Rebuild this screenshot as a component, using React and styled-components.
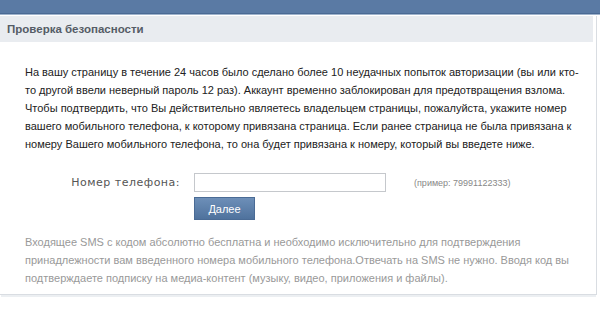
import styled, { createGlobalStyle } from "styled-components";

const Global = createGlobalStyle`
  body {
    margin: 0;
    background: #fff;
    font-family: "Liberation Sans", sans-serif;
  }
`;

const Page = styled.div`
  width: 600px;
  height: 309px;
  overflow: hidden;
  background: #fff;
`;

const TopBar = styled.div`
  height: 13px;
  background: #5a7aa4;
  border-bottom: 1px solid #4a6a94;
  box-shadow: 0 1px 0 #9fb3cc;
`;

const Card = styled.div`
  width: 596px;
  margin-top: 2px;
  border-right: 1px solid #d9dde2;
  border-bottom: 1px solid #d9dde2;
  box-shadow: 0 3px 0 -1px #eceff2;
`;

const Header = styled.div`
  height: 26px;
  margin-right: 3px;
  background: #e9ecf0;
  display: flex;
  align-items: center;
  padding-left: 7px;
  font-size: 11.5px;
  font-weight: bold;
  color: #555c66;
`;

const Body = styled.div`
  padding: 21px 0 7px 25px;
`;

const Text = styled.p`
  margin: 0;
  font-size: 11px;
  line-height: 18px;
  color: ${(p) => (p.muted ? "#999" : "#222")};
  white-space: nowrap;
`;

const Form = styled.div`
  display: grid;
  grid-template-columns: 155px 192px auto;
  column-gap: 14px;
  row-gap: 5px;
  margin: 20px 0 13px;
  align-items: center;
`;

const Label = styled.span`
  justify-self: end;
  font-family: "DejaVu Sans", "Liberation Sans", sans-serif;
  font-size: 11px;
  letter-spacing: 0.5px;
  color: #555;
`;

const Input = styled.input`
  box-sizing: border-box;
  width: 192px;
  height: 19px;
  border: 1px solid #c5c8cc;
  background: #fff;
  padding: 0 3px;
`;

const Hint = styled.span`
  margin-left: 14px;
  font-size: 9px;
  color: #888;
`;

const Button = styled.button`
  grid-column: 2;
  width: 61px;
  height: 23px;
  border: 1px solid #4a6b95;
  background: linear-gradient(#6d8fb8, #4f729d);
  color: #fff;
  font-family: "Liberation Sans", sans-serif;
  font-size: 11px;
  cursor: pointer;
`;

export default function App() {
  return (
    <Page>
      <Global />
      <TopBar />
      <Card>
        <Header>Проверка безопасности</Header>
        <Body>
          <Text>
            На вашу страницу в течение 24 часов было сделано более 10 неудачных попыток авторизации (вы или кто-
            <br />
            то другой ввели неверный пароль 12 раз). Аккаунт временно заблокирован для предотвращения взлома.
            <br />
            Чтобы подтвердить, что Вы действительно являетесь владельцем страницы, пожалуйста, укажите номер
            <br />
            вашего мобильного телефона, к которому привязана страница. Если ранее страница не была привязана к
            <br />
            номеру Вашего мобильного телефона, то она будет привязана к номеру, который вы введете ниже.
          </Text>
          <Form>
            <Label>Номер телефона:</Label>
            <Input />
            <Hint>(пример: 79991122333)</Hint>
            <Button>Далее</Button>
          </Form>
          <Text muted>
            Входящее SMS с кодом абсолютно бесплатна и необходимо исключительно для подтверждения
            <br />
            принадлежности вам введенного номера мобильного телефона.Отвечать на SMS не нужно. Вводя код вы
            <br />
            подтверждаете подписку на медиа-контент (музыку, видео, приложения и файлы).
          </Text>
        </Body>
      </Card>
    </Page>
  );
}
